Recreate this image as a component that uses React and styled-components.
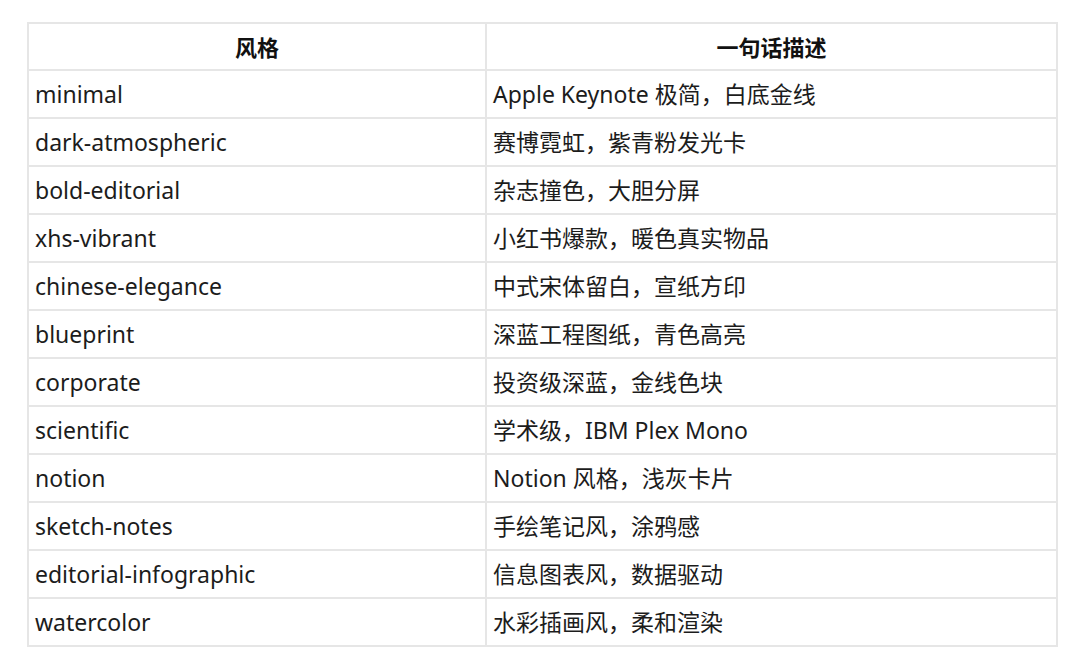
import React from "react";
import styled, { createGlobalStyle } from "styled-components";

const GlobalStyle = createGlobalStyle`
  html, body {
    margin: 0;
    background: #ffffff;
  }
  body {
    font-family: "Noto Sans", "Noto Sans CJK SC", sans-serif;
    color: #1c1c1c;
  }
`;

const Page = styled.div`
  padding: 22px 22px 0 27px;
`;

const Table = styled.table`
  width: 1031px;
  border-collapse: collapse;
  border: 2px solid #e2e2e2;
  table-layout: fixed;
`;

const HeadCell = styled.th`
  height: 45px;
  padding: 0 8px;
  border: 2px solid #e6e6e6;
  font-size: 22px;
  line-height: 26px;
  font-weight: 700;
  text-align: center;
  color: #111;
  width: ${(props) => props.$w || "auto"};
`;

const Cell = styled.td`
  height: 46px;
  padding: 0 7px 0 6px;
  border: 2px solid #e6e6e6;
  font-size: 23px;
  line-height: 28px;
  font-weight: 400;
  text-align: left;
  white-space: nowrap;
`;

const rows = [
  ["minimal", "Apple Keynote 极简，白底金线"],
  ["dark-atmospheric", "赛博霓虹，紫青粉发光卡"],
  ["bold-editorial", "杂志撞色，大胆分屏"],
  ["xhs-vibrant", "小红书爆款，暖色真实物品"],
  ["chinese-elegance", "中式宋体留白，宣纸方印"],
  ["blueprint", "深蓝工程图纸，青色高亮"],
  ["corporate", "投资级深蓝，金线色块"],
  ["scientific", "学术级，IBM Plex Mono"],
  ["notion", "Notion 风格，浅灰卡片"],
  ["sketch-notes", "手绘笔记风，涂鸦感"],
  ["editorial-infographic", "信息图表风，数据驱动"],
  ["watercolor", "水彩插画风，柔和渲染"],
];

const App = () => (
  <>
    <GlobalStyle />
    <Page>
      <Table>
        <thead>
          <tr>
            <HeadCell $w="440px">风格</HeadCell>
            <HeadCell>一句话描述</HeadCell>
          </tr>
        </thead>
        <tbody>
          {rows.map(([name, desc]) => (
            <tr key={name}>
              <Cell>{name}</Cell>
              <Cell>{desc}</Cell>
            </tr>
          ))}
        </tbody>
      </Table>
    </Page>
  </>
);

export default App;
